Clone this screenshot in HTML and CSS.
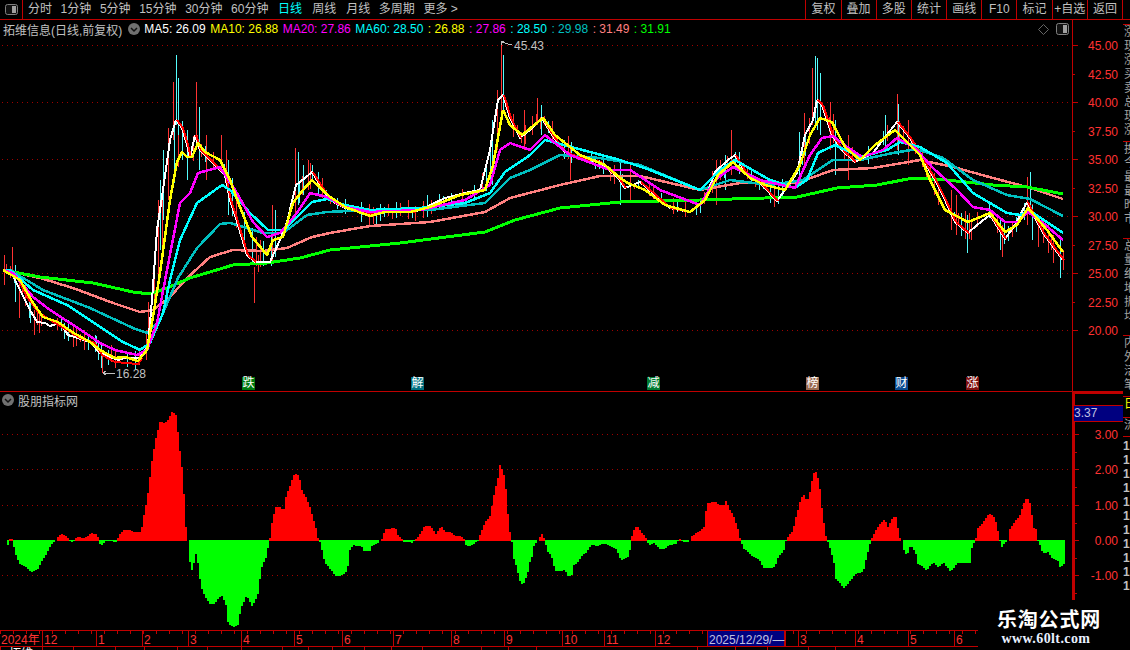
FILE: index.html
```html
<!DOCTYPE html>
<html lang="en">
<head>
    <meta charset="UTF-8">
    <meta name="viewport" content="width=device-width, initial-scale=1.0">
    <title>拓维信息</title>
    <link rel="stylesheet" href="styles.css">
</head>
<body>
    <div class="screen">
        <div class="topbar">
            <div class="layout-btn">
                <svg width="13" height="11" viewBox="0 0 13 11"><rect x="0.5" y="0.5" width="12" height="10" rx="2" fill="#111" stroke="#808080"/><rect x="7" y="2" width="4" height="7" fill="#a0a0a0"/></svg>
            </div>
            <div class="tabs">
                <span>分时</span><span>1分钟</span><span>5分钟</span><span>15分钟</span><span>30分钟</span><span>60分钟</span>
                <span class="active">日线</span><span class="wide">周线</span><span class="wide">月线</span><span>多周期</span><span>更多 &gt;</span>
            </div>
            <div class="tools">
                <span>复权</span><span>叠加</span><span>多股</span><span>统计</span><span>画线</span><span>F10</span><span>标记</span><span>+自选</span><span>返回</span>
            </div>
        </div>

        <div class="workspace">
            <div class="charts">
                <div class="panel price-panel" id="pricePanel">
                    <div class="legend">
                        <span class="stock-name">拓维信息(日线,前复权)</span>
                        <svg class="chevron" width="12" height="12" viewBox="0 0 12 12"><circle cx="6" cy="6" r="6" fill="#707070"/><path d="M3 5l3 3 3-3" fill="none" stroke="#111" stroke-width="1.5"/></svg>
                        <span class="c-white">MA5: 26.09</span>
                        <span class="c-yellow">MA10: 26.88</span>
                        <span class="c-magenta">MA20: 27.86</span>
                        <span class="c-cyan">MA60: 28.50</span>
                        <span class="c-yellow">: 26.88</span>
                        <span class="c-magenta">: 27.86</span>
                        <span class="c-cyan">: 28.50</span>
                        <span class="c-teal">: 29.98</span>
                        <span class="c-pink">: 31.49</span>
                        <span class="c-green">: 31.91</span>
                        <svg class="diamond" width="11" height="11" viewBox="0 0 11 11"><path d="M5.5 0.5l5 5-5 5-5-5z" fill="none" stroke="#666"/></svg>
                        <svg class="corner" width="13" height="12" viewBox="0 0 13 12"><rect x="0.5" y="0.5" width="12" height="11" rx="2" fill="#111" stroke="#808080"/><rect x="7" y="2" width="4" height="8" fill="#a0a0a0"/></svg>
                    </div>
                </div>
                <div class="panel indicator-panel" id="indicatorPanel">
                    <div class="legend sub-legend">
                        <svg class="chevron-sub" width="12" height="12" viewBox="0 0 12 12"><circle cx="6" cy="6" r="6" fill="#707070"/><path d="M3 5l3 3 3-3" fill="none" stroke="#111" stroke-width="1.5"/></svg>
                        <span class="stock-name">股朋指标网</span>
                    </div>
                    <div class="cursor-value">3.37</div>
                </div>
                <div class="date-row" id="dateRow"></div>
                <div class="status-row" id="statusRow"></div>
            </div>
            <div class="side-strip">
                <div class="strip-sec h5"></div>
                <div class="strip-sec h117"><p>涨幅</p><p>现价</p><p>涨跌</p><p>买价</p><p>卖价</p><p>总量</p><p>现量</p><p>涨速</p></div>
                <div class="strip-sec h97"><p>换手</p><p>今开</p><p>最高</p><p>最低</p><p>昨收</p><p>市盈</p></div>
                <div class="strip-sec h97"><p>总金</p><p>量比</p><p>细分</p><p>地区</p><p>振幅</p><p>均价</p></div>
                <div class="strip-sec h61"><p>内盘</p><p>外盘</p><p>活跃</p><p>笔涨</p></div>
                <div class="strip-sec h21"><p class="c-yellow">日</p></div>
                <div class="strip-sec h19"><p>流</p></div>
                <div class="strip-rest"><p>1</p><p>1</p><p>1</p><p>1</p><p>1</p><p>1</p><p>1</p><p>1</p><p>1</p><p>1</p><p>1</p></div>
            </div>
        </div>

        <div class="watermark">
            <div class="wm-title">乐淘公式网</div>
            <div class="wm-url">www.60lt.com</div>
        </div>
    </div>

    <script src="chart.js"></script>
</body>
</html>
```

FILE: styles.css
```css
html, body {
    margin: 0;
    height: 100%;
    background: #000;
    overflow: hidden;
}
body {
    font-family: "Liberation Sans", "Noto Sans CJK SC", sans-serif;
    font-size: 12px;
    color: #c0c0c0;
}
.screen {
    position: relative;
    width: 1130px;
    height: 650px;
    overflow: hidden;
}
.topbar {
    display: flex;
    height: 19px;
    border-bottom: 1px solid #c00000;
    line-height: 19px;
}
.layout-btn {
    display: flex;
    align-items: center;
    justify-content: center;
    width: 22px;
    border-right: 1px solid #c00000;
}
.tabs {
    display: flex;
    gap: 8.6px;
    margin-left: 5px;
    white-space: nowrap;
}
.tabs .active {
    color: #00ffff;
    margin-left: 1px;
}
.tabs .wide {
    margin-left: 1.5px;
}
.tools {
    display: flex;
    margin-left: auto;
    margin-right: 7px;
}
.tools span {
    width: 34.2px;
    border-left: 1px solid #c00000;
    text-align: center;
    white-space: nowrap;
}
.tools span:last-child {
    border-right: 1px solid #c00000;
}
.workspace {
    display: flex;
}
.charts {
    width: 1123px;
}
.panel {
    position: relative;
}
.panel svg.plot {
    position: absolute;
    left: 0;
    top: 0;
}
.price-panel {
    height: 371px;
    border-bottom: 1px solid #c00000;
}
.indicator-panel {
    height: 238px;
}
.legend {
    position: relative;
    z-index: 1;
    display: flex;
    align-items: center;
    gap: 4.5px;
    height: 18px;
    padding-left: 3px;
    padding-right: 54px;
    white-space: nowrap;
}
.sub-legend {
    height: 16px;
    gap: 5px;
}
.chevron {
    margin-left: 1px;
    margin-right: 0;
}
.chevron-sub {
    margin-left: -1px;
    margin-right: -1px;
}
.diamond {
    margin-left: auto;
    margin-right: 3px;
}
.c-white { color: #fff; }
.c-yellow { color: #ffff00; }
.c-magenta { color: #ff00ff; }
.c-cyan { color: #00ffff; }
.c-teal { color: #00c0c0; }
.c-pink { color: #ff8080; }
.c-green { color: #00ff00; }
.cursor-value {
    position: absolute;
    z-index: 1;
    left: 1074px;
    top: 13px;
    width: 49px;
    height: 15px;
    border-top: 1px solid #c00000;
    border-bottom: 1px solid #c00000;
    background: #000080;
    color: #c0c0e0;
    line-height: 15px;
}
.event-tag {
    position: absolute;
    z-index: 1;
    top: 357px;
    width: 13px;
    height: 13px;
    color: #fff;
    font-size: 12px;
    line-height: 13px;
    text-align: center;
}
.axis-label {
    fill: #ff3232;
    font-size: 12px;
    text-anchor: end;
}
.price-note {
    fill: #c0c0c0;
    font-size: 12px;
}
.date-row {
    display: flex;
    height: 15px;
    border-top: 1px solid #c00000;
    border-bottom: 1px solid #c00000;
    background-image: linear-gradient(90deg, #c00000 1px, transparent 1px);
    background-size: 13px 3px;
    background-repeat: repeat-x;
    overflow: hidden;
}
.date-cell {
    flex: none;
    box-sizing: border-box;
    padding: 2px 0 0 1px;
    border-left: 1px solid #c00000;
    color: #ff3232;
    line-height: 14px;
    white-space: nowrap;
}
.date-cell:first-child {
    border-left: none;
}
.date-cell.current {
    background: #000080;
    color: #c0c0e0;
    border-right: 1px solid #c00000;
}
.status-row {
    display: flex;
    height: 3px;
    overflow: hidden;
}
.status-cell {
    flex: none;
    box-sizing: border-box;
    padding-left: 8px;
    border-left: 1px solid #c00000;
    color: #fff;
    line-height: 14px;
    white-space: nowrap;
}
.side-strip {
    width: 7px;
    overflow: hidden;
    color: #a0a0a0;
    line-height: 14px;
}
.side-strip p {
    margin: 0 0 0 1px;
    white-space: nowrap;
}
.strip-sec {
    box-sizing: border-box;
    overflow: hidden;
    border-bottom: 1px solid #c00000;
}
.h5 { height: 5px; }
.h117 { height: 117px; }
.h97 { height: 97px; }
.h61 { height: 61px; }
.h21 { height: 21px; }
.h19 { height: 19px; }
.strip-rest {
    padding-top: 2px;
    color: #c0c0c0;
    font-weight: bold;
}
.strip-rest p {
    margin-left: 0;
}
.watermark {
    position: absolute;
    z-index: 2;
    left: 978px;
    top: 600px;
    width: 152px;
    height: 50px;
    background: #000;
    color: #fff;
    text-align: center;
    font-weight: bold;
}
.wm-title {
    margin: 8px 0 0 -10px;
    font-family: "Noto Sans CJK SC", sans-serif;
    font-size: 20px;
    line-height: 22px;
    letter-spacing: 0.8px;
}
.wm-url {
    margin: 0 0 0 -16px;
    font-family: "Liberation Serif", serif;
    font-size: 14px;
    line-height: 18px;
    letter-spacing: 0.4px;
    color: #e8f0ff;
}
```

FILE: chart.js
```js
const NS = 'http://www.w3.org/2000/svg';
const DARK_RED = '#c00000';

// line series, in screen pixels
const pink = [[3,270],[40,278],[73,288],[113,303],[140,312],[153,310],[170,297],[187,278],[210,257],[233,250],[263,251],[287,248],[312,237],[330,233],[370,226],[430,222],[485,212],[510,198],[560,185],[600,176],[640,176],[700,190],[740,183],[760,183],[797,183],[833,170],[873,168],[920,160],[953,167],[993,178],[1027,187],[1063,199]];
const green = [[3,270],[40,277],[93,283],[133,292],[150,294],[167,288],[190,278],[233,265],[267,263],[300,258],[330,250],[400,243],[485,232],[515,220],[560,208],[620,202],[700,200],[797,197],[837,188],[877,185],[913,178],[947,180],[993,185],[1027,187],[1063,194]];
const teal = [[3,270],[10,270],[43,290],[90,308],[133,328],[147,333],[160,320],[178,278],[197,248],[220,224],[230,223],[263,233],[283,233],[307,215],[327,212],[370,210],[430,210],[485,203],[510,178],[530,170],[560,155],[600,158],[640,165],[700,190],[730,180],[770,185],[803,180],[833,160],[860,160],[893,153],[917,149],[943,158],[973,180],[1007,195],[1030,199],[1063,216]];
const cyan = [[3,270],[10,270],[33,290],[67,305],[100,327],[123,342],[140,350],[150,343],[163,313],[170,280],[180,240],[197,203],[222,185],[230,190],[250,213],[268,230],[283,230],[297,217],[312,202],[327,199],[345,205],[370,210],[420,208],[465,203],[490,193],[505,172],[530,155],[545,140],[575,148],[620,160],[650,170],[700,190],[720,170],[735,160],[770,180],[795,188],[807,180],[818,153],[835,145],[860,157],[887,150],[900,142],[920,147],[947,163],[973,193],[1007,213],[1020,215],[1030,211],[1063,233]];
const magenta = [[3,270],[13,273],[33,297],[50,310],[70,323],[100,343],[115,350],[137,355],[147,350],[157,323],[167,270],[180,203],[190,193],[198,173],[220,167],[237,193],[253,222],[267,237],[280,233],[297,213],[310,193],[327,197],[345,207],[370,212],[420,210],[465,200],[490,185],[500,150],[510,143],[530,150],[545,135],[570,155],[610,170],[630,170],[660,190],[700,205],[715,180],[733,167],[760,180],[795,188],[810,155],[822,138],[833,136],[847,147],[862,157],[883,150],[897,138],[915,148],[933,168],[957,190],[973,207],[990,210],[1005,222],[1018,222],[1028,212],[1043,223],[1063,240]];
const yellow = [[3,270],[20,280],[33,303],[43,317],[58,322],[72,332],[90,342],[100,350],[115,358],[125,357],[138,361],[147,350],[152,323],[160,273],[170,200],[177,162],[182,152],[187,157],[192,157],[198,143],[205,152],[220,160],[230,180],[240,207],[252,237],[267,255],[273,240],[283,237],[293,203],[303,190],[312,180],[330,197],[345,207],[370,216],[385,212],[410,212],[430,207],[460,195],[485,190],[493,165],[503,110],[510,125],[522,135],[543,118],[555,135],[580,155],[605,165],[620,178],[628,183],[645,190],[665,205],[690,212],[705,200],[718,175],[733,162],[750,178],[765,185],[785,190],[800,165],[810,135],[820,118],[832,122],[845,147],[860,160],[875,145],[895,130],[905,140],[920,155],[930,180],[945,210],[968,222],[990,213],[1005,232],[1017,225],[1028,208],[1047,230],[1063,252]];
const white = [[3,270],[12,274],[20,290],[30,310],[37,322],[45,323],[50,326],[60,323],[68,335],[90,342],[100,353],[118,360],[125,358],[140,358],[148,345],[152,300],[157,230],[163,190],[170,140],[176,120],[182,128],[187,145],[190,158],[195,135],[200,150],[215,165],[225,175],[230,200],[238,225],[247,255],[255,262],[270,262],[280,240],[287,222],[296,185],[305,178],[312,172],[320,185],[330,200],[345,208],[360,212],[375,215],[385,210],[400,210],[415,212],[430,205],[445,198],[465,193],[480,190],[490,150],[498,100],[503,95],[510,118],[520,138],[530,130],[542,118],[552,135],[565,152],[580,158],[600,162],[618,178],[625,188],[640,182],[655,195],[670,208],[690,212],[705,200],[715,172],[728,160],[735,155],[745,172],[760,183],[777,201],[785,190],[797,173],[805,135],[813,120],[817,100],[822,105],[832,135],[842,150],[855,162],[873,153],[885,137],[897,122],[910,138],[923,160],[935,180],[945,200],[955,222],[968,233],[977,225],[990,215],[1005,239],[1015,225],[1027,202],[1043,233],[1063,260]];
const redStart = [[3,270],[15,273],[27,297],[38,312],[50,320],[67,330],[80,338],[95,343],[102,355],[115,362],[138,364],[142,358]];

// big wicks: x, top, bottom, colour (r / c)
const wicks = [[4,255,285,'r'],[12,247,275,'r'],[15,265,302,'c'],[19,280,318,'r'],[30,300,323,'c'],[34,310,335,'r'],[39,310,333,'r'],[68,320,337,'c'],[73,325,347,'r'],[84,330,350,'r'],[95,335,352,'c'],[98,340,360,'c'],[101,345,368,'c'],[102,350,373,'r'],[108,350,365,'c'],[115,350,368,'r'],[139,350,365,'r'],[146,330,360,'r'],[148,302,345,'r'],[158,200,280,'r'],[160,180,250,'c'],[163,150,220,'c'],[168,128,200,'r'],[173,82,140,'r'],[176,55,125,'c'],[178,78,135,'c'],[187,130,180,'c'],[196,82,135,'r'],[199,107,170,'c'],[206,135,180,'r'],[221,135,170,'r'],[226,150,185,'r'],[228,160,215,'c'],[254,267,303,'r'],[258,255,272,'r'],[272,205,262,'r'],[275,210,250,'c'],[295,148,215,'r'],[298,152,205,'c'],[303,165,195,'c'],[308,160,190,'r'],[312,165,180,'c'],[501,42,118,'r'],[503,55,112,'c'],[497,90,150,'r'],[492,120,185,'c'],[524,110,150,'r'],[537,98,125,'r'],[541,105,135,'c'],[570,145,180,'r'],[620,160,205,'c'],[630,165,200,'r'],[716,160,205,'r'],[725,155,190,'c'],[731,130,175,'r'],[799,132,185,'c'],[804,113,170,'r'],[812,68,125,'r'],[815,56,125,'c'],[817,58,130,'c'],[820,73,135,'c'],[830,102,150,'r'],[835,120,175,'c'],[848,135,180,'r'],[885,115,150,'c'],[897,94,150,'r'],[898,104,155,'c'],[908,120,165,'r'],[951,190,230,'r'],[956,195,235,'r'],[967,215,253,'c'],[971,220,240,'r'],[1000,220,250,'c'],[1002,225,257,'r'],[1027,177,225,'r'],[1030,172,215,'c'],[1032,205,240,'c'],[1038,215,247,'r'],[1048,225,253,'r'],[1053,235,263,'r'],[1060,240,278,'c'],[1063,250,270,'r']];

// indicator outline from the left half and the right half of the pane
const histLeft = [[8,417],[14,420],[22,422],[24,438],[30,414],[38,418],[44,458],[58,490],[75,500],[92,516],[110,510],[122,488],[136,465],[150,438],[165,420],[170,414],[180,400],[195,408],[205,420],[215,428],[222,420],[226,411],[250,414],[272,399],[288,405],[292,420],[298,438],[310,425],[330,422],[345,428],[348,420],[350,407],[365,390],[385,390],[400,397],[418,394],[426,344],[436,294],[450,180],[460,120],[466,97],[475,58],[482,72],[495,64],[510,34],[522,46],[530,135],[540,213],[546,312],[552,412],[556,420],[560,472],[566,514],[572,498],[580,460],[586,492],[594,555],[604,585],[622,614],[636,610],[642,600],[655,585],[668,610],[675,672],[692,680],[705,675],[712,628],[722,605],[730,585],[745,617],[755,605],[765,575],[772,510],[782,484],[790,465],[796,420],[800,412],[805,365],[815,322],[832,322],[838,340],[846,292],[860,250],[872,220],[885,225],[892,268],[905,292],[918,322],[928,360],[936,388],[940,414],[945,420],[950,440],[960,485],[975,505],[995,530],[1015,525],[1028,510],[1035,450],[1045,435],[1070,440],[1075,452],[1095,452],[1100,437],[1115,432],[1125,420],[1130,417],[1140,388],[1170,384],[1178,408],[1190,418],[1195,425],[1220,428],[1228,420],[1240,407],[1255,380],[1275,378],[1290,402],[1305,378],[1320,398],[1335,396],[1345,406],[1360,408],[1372,415],[1380,440],[1400,434],[1416,420],[1420,405],[1435,367],[1450,348],[1462,280],[1472,240],[1480,190],[1495,240],[1500,318],[1508,392],[1514,420],[1520,475],[1530,508],[1540,552],[1550,550],[1560,524],[1568,510]];
const histRight = [[0,485],[10,440],[22,420],[25,417],[35,400],[43,420],[50,455],[62,468],[72,512],[90,512],[100,510],[110,528],[122,526],[125,497],[140,485],[150,468],[165,455],[175,435],[195,438],[215,430],[235,440],[250,450],[262,482],[285,470],[292,420],[295,395],[308,378],[320,396],[335,415],[342,435],[358,430],[375,448],[390,445],[400,435],[420,432],[428,420],[432,418],[440,425],[458,425],[465,408],[485,395],[500,385],[505,340],[512,310],[535,305],[545,315],[560,315],[566,297],[572,325],[585,345],[596,378],[603,405],[605,420],[615,445],[640,470],[660,480],[672,505],[705,502],[715,470],[730,455],[737,420],[745,408],[757,390],[768,340],[780,295],[792,282],[796,310],[805,280],[815,222],[825,213],[835,270],[842,345],[850,392],[853,420],[860,432],[875,490],[880,537],[890,548],[905,565],[920,545],[935,525],[960,512],[970,465],[980,425],[985,412],[992,395],[1005,375],[1020,357],[1030,380],[1040,360],[1052,345],[1064,412],[1070,420],[1075,448],[1085,468],[1095,435],[1110,460],[1115,490],[1130,498],[1140,512],[1160,488],[1175,503],[1190,488],[1210,515],[1230,490],[1250,490],[1268,488],[1272,440],[1282,420],[1288,385],[1300,372],[1320,340],[1338,352],[1345,385],[1350,418],[1358,440],[1370,425],[1375,420],[1380,390],[1395,365],[1410,345],[1420,310],[1430,292],[1442,317],[1447,380],[1458,390],[1460,420],[1466,432],[1475,460],[1490,457],[1500,472],[1520,482],[1524,503],[1540,490]];

const events = [
    ['跌', 242, '#007a10'],
    ['解', 411, '#006f80'],
    ['减', 647, '#007a30'],
    ['榜', 806, '#9a6a50'],
    ['财', 895, '#0a4a90'],
    ['涨', 966, '#801010']
];

const dateCells = [
    ['2024年', 42], ['12', 54], ['1', 46], ['2', 46], ['3', 53], ['4', 53], ['5', 48], ['6', 51],
    ['7', 58], ['8', 53], ['9', 58], ['10', 42], ['11', 51], ['12', 52],
    ['2025/12/29/—', 78, true], ['', 13], ['3', 57], ['4', 53], ['5', 46], ['6', 30]
];
const statusCells = [42, 31, 42, 29, 33, 30, 34, 41, 26, 24, 32, 27, 31, 59, 27, 28, 161, 38, 32, 41, 27, 16];

function el(name, attrs, text) {
    const node = document.createElementNS(NS, name);
    Object.keys(attrs).forEach(key => node.setAttribute(key, attrs[key]));
    if (text !== undefined) node.textContent = text;
    return node;
}

function makePlot(parent, top, height) {
    const svg = el('svg', {
        class: 'plot', width: 1123, height: height,
        viewBox: `0 ${top} 1123 ${height}`, 'shape-rendering': 'crispEdges'
    });
    parent.insertBefore(svg, parent.firstChild);
    return svg;
}

function line(svg, points, color, width) {
    svg.appendChild(el('polyline', {
        points: points.map(p => p.join(',')).join(' '),
        fill: 'none', stroke: color, 'stroke-width': width, 'stroke-linejoin': 'bevel'
    }));
}

function dots(svg, y) {
    svg.appendChild(el('line', {
        x1: 2, x2: 1071, y1: y + 0.5, y2: y + 0.5,
        stroke: '#a00000', 'stroke-dasharray': '1 4'
    }));
}

function valueAt(series, x) {
    for (let i = 1; i < series.length; i++) {
        if (x <= series[i][0]) {
            const a = series[i - 1], b = series[i];
            return a[1] + (b[1] - a[1]) * (x - a[0]) / ((b[0] - a[0]) || 1);
        }
    }
    return series[series.length - 1][1];
}

function noise(x) {
    const n = Math.sin(x * 12.9898) * 43758.5453;
    return n - Math.floor(n);
}

function drawWick(svg, x, top, bottom, kind) {
    svg.appendChild(el('rect', {
        x: x, y: top, width: 1, height: bottom - top,
        fill: kind === 'r' ? '#ff3232' : '#54fcfc'
    }));
}

function drawPrice() {
    const svg = makePlot(document.getElementById('pricePanel'), 20, 371);

    [45, 102, 159, 216, 273, 330].forEach(y => dots(svg, y));

    // small wicks that follow the short average
    for (let x = 6; x < 1062; x += 3.9) {
        if (noise(x + 3) < 0.4) continue;
        const a = valueAt(white, x), b = valueAt(yellow, x);
        const top = Math.min(a, b) - 1 - noise(x) * 10;
        const bottom = Math.max(a, b) + 1 + noise(x + 1) * 9;
        drawWick(svg, Math.round(x), Math.round(top), Math.round(bottom), noise(x + 2) < 0.55 ? 'r' : 'c');
    }
    wicks.forEach(w => drawWick(svg, w[0], w[1], w[2], w[3]));

    line(svg, pink, '#ff8080', 2.5);
    line(svg, green, '#00ff00', 3);
    line(svg, teal, '#00c0c0', 2.5);
    line(svg, white, '#ffffff', 2);
    line(svg, redStart, '#ff0000', 2);

    // falling parts of the short average are drawn red
    for (let i = 1; i < white.length; i++) {
        if (white[i][0] > 150 && white[i][1] > white[i - 1][1]) {
            line(svg, [[white[i - 1][0] + 1, white[i - 1][1]], [white[i][0] + 1, white[i][1]]], '#ff0000', 2);
        }
    }
    line(svg, cyan, '#00ffff', 2.5);
    line(svg, magenta, '#ff00ff', 2.5);
    line(svg, yellow, '#ffff00', 2.5);

    // axis
    svg.appendChild(el('rect', { x: 1072, y: 20, width: 1, height: 371, fill: DARK_RED }));
    svg.appendChild(el('rect', { x: 1123, y: 20, width: 1, height: 371, fill: DARK_RED }));
    for (let i = 0; i <= 10; i++) {
        const price = 45 - i * 2.5;
        const y = Math.round(45 + i * 28.5);
        svg.appendChild(el('rect', { x: 1073, y: y, width: i % 2 ? 2 : 5, height: 1, fill: DARK_RED }));
        svg.appendChild(el('text', { class: 'axis-label', x: 1118, y: y + 5, 'shape-rendering': 'auto' }, price.toFixed(2)));
    }

    // high and low notes
    line(svg, [[501, 42], [512, 45]], '#c0c0c0', 1);
    line(svg, [[501, 42], [504, 41]], '#c0c0c0', 1);
    line(svg, [[501, 42], [502, 45]], '#c0c0c0', 1);
    svg.appendChild(el('text', { class: 'price-note', x: 514, y: 50 }, '45.43'));
    line(svg, [[103, 373], [115, 373]], '#c0c0c0', 1);
    line(svg, [[103, 373], [106, 371]], '#c0c0c0', 1);
    line(svg, [[103, 373], [106, 375]], '#c0c0c0', 1);
    svg.appendChild(el('text', { class: 'price-note', x: 116, y: 378 }, '16.28'));

    const panel = document.getElementById('pricePanel');
    events.forEach(e => {
        const tag = document.createElement('div');
        tag.className = 'event-tag';
        tag.textContent = e[0];
        tag.style.left = e[1] + 'px';
        tag.style.background = e[2];
        panel.appendChild(tag);
    });
}

function drawIndicator() {
    const svg = makePlot(document.getElementById('indicatorPanel'), 392, 238);

    [434, 469, 505, 575].forEach(y => dots(svg, y));

    const outline = histLeft.map(p => [p[0] / 2.958, 400 + p[1] / 3])
        .concat(histRight.map(p => [530 + p[0] / 2.877, 400 + p[1] / 3]));
    outline.sort((a, b) => a[0] - b[0]);

    for (let x = 3; x < 1065; x += 2) {
        const y = Math.round(valueAt(outline, x + 1));
        if (y < 540) {
            svg.appendChild(el('rect', { x: x, y: y, width: 2, height: 541 - y, fill: '#ff0000' }));
        } else if (y > 540) {
            svg.appendChild(el('rect', { x: x, y: 540, width: 2, height: y - 540, fill: '#00ff00' }));
        }
    }

    // axis
    svg.appendChild(el('rect', { x: 1072, y: 392, width: 3, height: 238, fill: DARK_RED }));
    svg.appendChild(el('rect', { x: 1075, y: 392, width: 48, height: 2, fill: DARK_RED }));
    svg.appendChild(el('rect', { x: 1123, y: 392, width: 2, height: 238, fill: DARK_RED }));
    [[3, 434], [2, 469], [1, 505], [0, 540], [-1, 575]].forEach(item => {
        svg.appendChild(el('rect', { x: 1075, y: item[1], width: 4, height: 1, fill: DARK_RED }));
        svg.appendChild(el('rect', { x: 1075, y: item[1] + 18, width: 2, height: 1, fill: DARK_RED }));
        svg.appendChild(el('text', { class: 'axis-label', x: 1118, y: item[1] + 5, 'shape-rendering': 'auto' }, item[0].toFixed(2)));
    });
}

function drawDates() {
    const row = document.getElementById('dateRow');
    dateCells.forEach(c => {
        const cell = document.createElement('div');
        cell.className = c[2] ? 'date-cell current' : 'date-cell';
        cell.textContent = c[0];
        cell.style.width = c[1] + 'px';
        row.appendChild(cell);
    });

    const status = document.getElementById('statusRow');
    statusCells.forEach((w, i) => {
        const cell = document.createElement('div');
        cell.className = 'status-cell';
        cell.textContent = i === 0 ? '拓维' : '';
        cell.style.width = w + 'px';
        status.appendChild(cell);
    });
}

drawPrice();
drawIndicator();
drawDates();
```
